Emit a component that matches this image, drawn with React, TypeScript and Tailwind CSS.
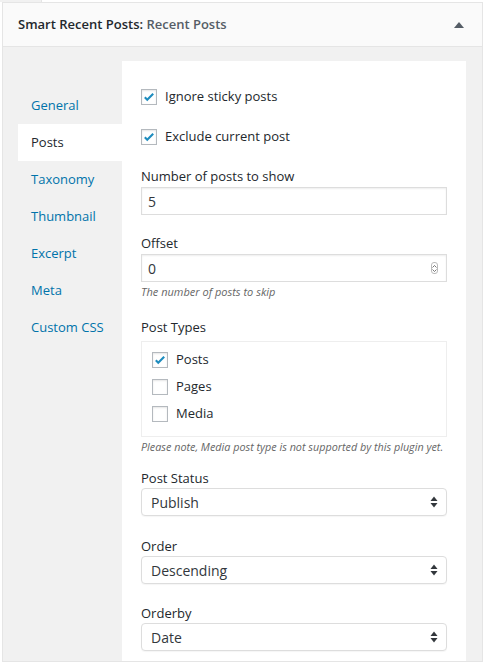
import React from 'react';

const font = { fontFamily: '"Open Sans", "Noto Sans", sans-serif' };

function Check({ checked }: { checked?: boolean }) {
  return (
    <span className="w-4 h-4 border border-[#b4b9be] bg-white shadow-[inset_0_1px_2px_rgba(0,0,0,0.1)] flex items-center justify-center shrink-0">
      {checked && (
        <svg width="14" height="14" viewBox="0 0 20 20">
          <path d="M4 10.5l3.5 3.5L16 5.5" fill="none" stroke="#1e8cbe" strokeWidth="3" />
        </svg>
      )}
    </span>
  );
}

function Arrows() {
  return (
    <svg width="8" height="12" viewBox="0 0 8 12">
      <path d="M4 0.5L7.5 5H0.5z" fill="#32373c" />
      <path d="M4 11.5L7.5 7H0.5z" fill="#32373c" />
    </svg>
  );
}

function Select({ value }: { value: string }) {
  return (
    <div className="h-[28px] border border-[#ddd] rounded-[4px] bg-white flex items-center justify-between pl-[9px] pr-[8px] shadow-[0_1px_1px_rgba(0,0,0,0.04)]">
      <span className="text-[14px] text-[#32373c]">{value}</span>
      <Arrows />
    </div>
  );
}

const tabs = ['General', 'Posts', 'Taxonomy', 'Thumbnail', 'Excerpt', 'Meta', 'Custom CSS'];

export default function App() {
  return (
    <div className="w-[485px] h-[662px] bg-white overflow-hidden relative" style={font}>
      <div className="absolute left-0 top-0 w-[42px] h-[2px] bg-[#f1f1f1] border-r border-[#e5e5e5]" />
      <div className="ml-[2px] mt-[2px] w-[481px] h-[660px] border border-[#e5e5e5] flex flex-col">
        <div className="h-[44px] shrink-0 bg-[#fafafa] border-b border-[#e5e5e5] flex items-center justify-between pl-[15px] pr-[18px]">
          <span className="text-[13px] font-semibold text-[#23282d]">
            Smart Recent Posts: <span className="text-[#555d66]">Recent Posts</span>
          </span>
          <svg width="10" height="6" viewBox="0 0 10 6">
            <path d="M5 0L10 6H0z" fill="#555d66" />
          </svg>
        </div>
        <div className="flex-1 bg-[#f1f1f1] flex pl-[15px] pr-[16px] pt-[14px]">
          <div className="w-[104px] shrink-0 pt-[26px]">
            {tabs.map((t) => (
              <div
                key={t}
                className={`h-[37px] flex items-center pl-[13px] text-[13px] ${t === 'Posts' ? 'bg-white text-[#23282d]' : 'text-[#0073aa]'}`}
              >
                {t}
              </div>
            ))}
          </div>
          <div className="flex-1 bg-white px-[19px] pt-[28px] text-[13px] text-[#23282d]">
            <label className="flex items-center gap-[8px] h-[16px]">
              <Check checked />
              <span>Ignore sticky posts</span>
            </label>
            <label className="flex items-center gap-[8px] h-[16px] mt-[24px]">
              <Check checked />
              <span>Exclude current post</span>
            </label>
            <div className="mt-[22px] leading-[18px]">Number of posts to show</div>
            <div className="mt-[2px] h-[28px] border border-[#ddd] bg-white flex items-center pl-[6px] text-[14px] text-[#32373c] shadow-[inset_0_1px_2px_rgba(0,0,0,0.07)]">
              5
            </div>
            <div className="mt-[19px] leading-[18px]">Offset</div>
            <div className="mt-[2px] h-[28px] border border-[#ddd] bg-white flex items-center justify-between pl-[6px] pr-[8px] text-[14px] text-[#32373c] shadow-[inset_0_1px_2px_rgba(0,0,0,0.07)]">
              <span>0</span>
              <span className="w-[7px] h-[12px] border border-[#bbb] rounded-[3px] flex flex-col items-center justify-center gap-[1px]">
                <svg width="5" height="3" viewBox="0 0 5 3"><path d="M0.5 2.5L2.5 0.5L4.5 2.5" fill="none" stroke="#555" strokeWidth="0.8" /></svg>
                <svg width="5" height="3" viewBox="0 0 5 3"><path d="M0.5 0.5L2.5 2.5L4.5 0.5" fill="none" stroke="#555" strokeWidth="0.8" /></svg>
              </span>
            </div>
            <div className="mt-[2px] text-[11px] italic text-[#666] leading-[16px]">The number of posts to skip</div>
            <div className="mt-[18px] leading-[18px]">Post Types</div>
            <div className="mt-[5px] h-[96px] border border-[#eee] pl-[10px] pt-[10px] flex flex-col gap-[11px]">
              <label className="flex items-center gap-[8px] h-[16px]">
                <Check checked />
                <span>Posts</span>
              </label>
              <label className="flex items-center gap-[8px] h-[16px]">
                <Check />
                <span>Pages</span>
              </label>
              <label className="flex items-center gap-[8px] h-[16px]">
                <Check />
                <span>Media</span>
              </label>
            </div>
            <div className="mt-[2px] text-[10.8px] italic text-[#666] leading-[16px] whitespace-nowrap">
              Please note, Media post type is not supported by this plugin yet.
            </div>
            <div className="mt-[14px] leading-[18px]">Post Status</div>
            <div className="mt-[1px]">
              <Select value="Publish" />
            </div>
            <div className="mt-[21px] leading-[18px]">Order</div>
            <div className="mt-[1px]">
              <Select value="Descending" />
            </div>
            <div className="mt-[20px] leading-[18px]">Orderby</div>
            <div className="mt-[1px]">
              <Select value="Date" />
            </div>
          </div>
        </div>
      </div>
    </div>
  );
}
